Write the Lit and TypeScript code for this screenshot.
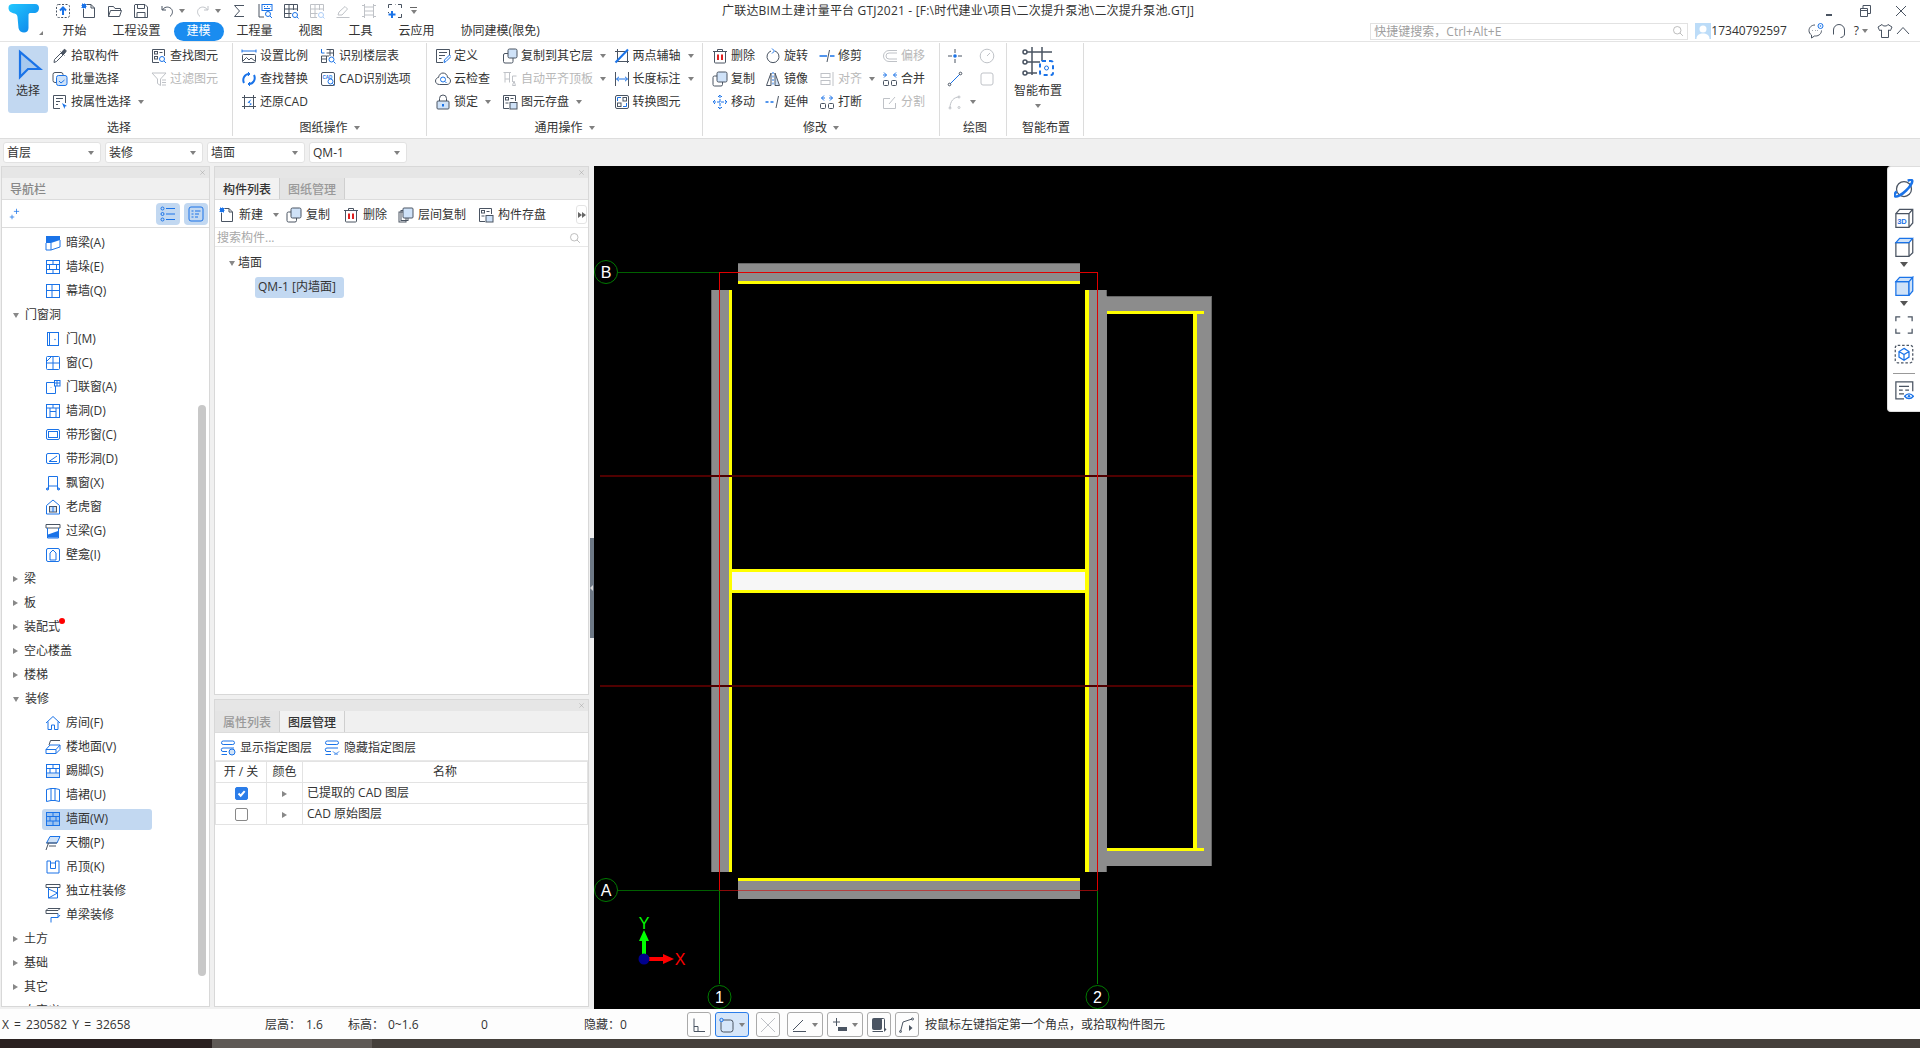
import { LitElement, html, css, svg, nothing } from "lit";
import { customElement } from "lit/decorators.js";

const icons: Record<string, unknown> = {
  // quick access bar
  imp: svg`<rect x="1.5" y="1.5" width="13" height="13" rx="2" stroke-dasharray="2 1.5"/><path class="b w2" d="M8 12V5M5 7.5 8 4.5l3 3"/>`,
  newf: svg`<path d="M2.5 6v8.5h11V5L10 1.5H5.5M10 1.5V5h3.5"/><rect class="bf" x="1" y="1" width="4" height="4" stroke-dasharray="1 1"/>`,
  open: svg`<path d="M1.5 13.5v-10h5l1.5 2h5.5v2M1.5 13.5l2-6h11l-2 6z"/>`,
  save: svg`<path d="M2 1.5h10l2.5 2.5v10.500H1.500V2zM4.500 1.500v4h7v-4M4 14.500v-5h8v5"/>`,
  undo: svg`<path d="M3 3v4h4M3.500 7C5 4 9 3 12 5.500c2.500 2.500 1.500 6-1 8"/>`,
  redo: svg`<path d="M13 3v4H9M12.500 7C11 4 7 3 4 5.500c-2.500 2.500-1.500 6 1 8"/>`,
  sigma: svg`<path d="M13 2.500H3.500L8.500 8l-5 5.500H13"/>`,
  tblq: svg`<path d="M2 1v13h5"/><rect class="b" x="5" y="1.500" width="10" height="6"/><path class="b" d="M7 3.500h1M10 3.500h1M13 3.500h.5M7 5.500h6"/><circle class="b" cx="11" cy="11" r="2.500"/><path class="b" d="m13 13 2 2"/>`,
  gridq: svg`<path d="M8 14.500H1.500v-13h13V8M1.500 6h13M1.500 10.500h7M6 1.500v13M10.500 1.500V7"/><circle class="b" cx="12" cy="12" r="2.500"/><path class="b" d="m14 14 1.500 1.500"/>`,
  pen: svg`<path d="M1.500 14.500h13M3 12l1-3 6-5.500 2.500 2.500L7 12z"/>`,
  film: svg`<path d="M3.500 1v14M12.500 1v14M3.500 4h9M3.500 8h9M3.500 12h9M1 2.500h2.500M1 13.500h2.500M12.500 2.500H15M12.500 13.500H15"/>`,
  frameplus: svg`<path d="M5 1.500H1.500V5M11 1.500h3.500V5M14.500 11v3.500H11M1.500 9v1M8 1.500h.5"/><path class="b w2" d="M5 8v7M1.500 11.500h7"/>`,
  // ribbon
  pick: svg`<path d="m2 14.500.5-3L9 5l2 2-6.500 6.500zM8.500 3.500l4 4"/><path class="k" d="m10 4 2-2.500c1-.5 2.500 1 2 2L12 6z"/>`,
  batch: svg`<rect x="1" y="1.500" width="10" height="10" rx="2"/><rect class="b lf" x="4.500" y="4.500" width="10.500" height="10" rx="2"/><path class="b" d="m7 10 2 2 3.500-3"/>`,
  attr: svg`<path d="M8 14.500H1.500v-13h12V9M4 4.500h7M4 7.500h4M4 10.500h2"/><path class="bs" d="m10 9 5 3-2 .5-.5 2.500z"/>`,
  find: svg`<path d="M8 14.500H1.500v-13h12V8"/><rect x="3.500" y="3.500" width="3" height="2.500"/><rect x="3.500" y="8.500" width="3" height="2.500"/><path d="M8.500 4.500h3"/><circle class="b" cx="11" cy="11" r="2.500"/><path class="b" d="m13 13 2 2"/>`,
  filter: svg`<path d="M1 2h14L9.500 8v6.500L6.500 12.500V8zM11 9h4M11 11.500h4M11 14h4"/>`,
  scale: svg`<path class="b" d="M1 1.500v3M15 1.500v3M1 3h14"/><rect x="1.500" y="6.500" width="13" height="8" rx="1"/><path d="m2 13 3.500-3.500L8 12l2-2 4 3"/>`,
  floor: svg`<path class="b" d="M1.500 1v4h3"/><path d="M1.500 14.500V8h5v6.500zM6.500 1.500h7v7M6.500 5h7M10 1.500V8M6.500 8H9M1.500 11h5"/><circle class="b" cx="11.500" cy="11.500" r="2.500"/><path class="b" d="m13.500 13.500 2 2"/>`,
  replace: svg`<path class="b w2" d="M3 12C1 8 3.500 3 8 3M13 4c2 4-.5 9-5 9"/><path class="b" d="m7 1 2 2-2 2M9 11l-2 2 2 2"/>`,
  cad: svg`<rect x="1.500" y="1.500" width="13" height="13" rx="1.500"/><text class="mini" x="2.500" y="7.500">CAD</text><circle class="b" cx="10.500" cy="10.500" r="2.500"/><path class="b" d="m12.500 12.500 2 2"/>`,
  restore: svg`<path d="M1 3.500h14M1 12.500h14M3.500 1v14M12.500 1v14"/><path class="bs" d="M10.500 5 6.500 8.500l3 1-1.500 2.500 3-2-2.500-1.500z"/>`,
  define: svg`<path d="M8 14.500H1.500v-13h13V7M4 4.500h8M4 7.500h6M4 10.500h2.500"/><path class="b" d="m9 14.500.5-2.500 5-5 1.500 1.500-5 5z"/>`,
  cloud: svg`<path d="M4.500 13.500C2 13.500.5 11.800.5 10S2 6.500 3.500 6.500C4 3.500 6 2 8 2s4.500 1.500 4.500 4.500c2 0 3 1.800 3 3.500s-1.500 3.500-3.500 3.500z"/><circle class="b" cx="8" cy="8.500" r="2.500"/><path class="b" d="m10 10.500 1.500 1.500"/>`,
  lock: svg`<path d="M4.500 7V4.500a3.500 3.500 0 0 1 7 0V7"/><rect class="lf" x="2" y="7" width="12" height="8" rx="1"/><path class="b w2" d="M8 10v2.500"/>`,
  copyto: svg`<rect x="1.500" y="5.500" width="9.500" height="9.500" rx="1.500"/><rect class="lf" x="6" y="1" width="9" height="9" rx="1.500"/>`,
  auto: svg`<path d="M3 1.500v10M7.500 1.500v10M1.500 1.500H9M10.500 5h4M10.500 5v6M12 10l1.500 4.500h-3zM3 8h4.500"/>`,
  store: svg`<path d="M7 14.500H1.500v-13h12V7"/><rect x="3.500" y="3.500" width="3" height="2.500"/><path d="M8.500 4.500h3M3.500 9h3"/><rect class="lf" x="8" y="8.500" width="7" height="6.500"/>`,
  twopt: svg`<path d="M3.500 1v12.500H15M1 3.500h12.500V15"/><path class="b w2" d="M1.500 14.500 14 1.500"/>`,
  dim: svg`<path d="M1.500 1v14M14.500 1v14"/><path class="b" d="M2.500 8h11M5 5.800 2.500 8 5 10.200M11 5.800 13.500 8 11 10.200"/>`,
  convert: svg`<rect x="1.500" y="1.500" width="13" height="13" rx="1.500"/><rect x="3.500" y="9" width="3.500" height="3.500"/><rect x="9" y="3.500" width="3.500" height="3.500"/><path class="b" d="M3.500 7V3.500H7M12.500 9v3.500H9"/>`,
  del: svg`<path d="M1 3.500h14M5.500 3.500V1.500h5v2M2.500 3.500v10.500a1 1 0 0 0 1 1h9a1 1 0 0 0 1-1V3.500"/><path class="r w2" d="M6 6.500v5.500M10 6.500v5.500"/>`,
  copy: svg`<rect x="1" y="5" width="9.500" height="10" rx="1.500"/><rect class="lf" x="5" y="1" width="10" height="10" rx="1.500"/>`,
  move: svg`<path class="b" d="M8 1v14M1 8h14M6 3l2-2 2 2M6 13l2 2 2-2M3 6 1 8l2 2M13 6l2 2-2 2" stroke-dasharray="3 1"/>`,
  rotate: svg`<path d="M10 3a6 6 0 1 1-4 0"/><path class="b" d="M7 .5 9.500 3 7 5.500"/>`,
  mirror: svg`<path d="M6 2 1.500 14.500H6z"/><path class="lf" d="M10 2l4.500 12.500H10z"/><path class="b" d="M8 1v14" stroke-dasharray="2 1.500"/>`,
  trim: svg`<path class="b" d="M.5 8H8M11 8h4.500" stroke-width="1.300"/><path d="M8 14 10.500 2"/>`,
  extend: svg`<path class="b" d="M.5 8H10" stroke-dasharray="3 2" stroke-width="1.300"/><path d="M11 14 13.500 2"/>`,
  align: svg`<rect x="2" y="2.500" width="9" height="4"/><rect x="2" y="9.500" width="9" height="4"/><path d="M14 1v14"/>`,
  brk: svg`<rect x="1.500" y="9.500" width="5" height="5" rx="1"/><rect x="9.500" y="9.500" width="5" height="5" rx="1"/><path class="b" d="M5 1.500 2.500 4 5 6.500M2.500 4H6M11 1.500 13.500 4 11 6.500M13.500 4H10"/>`,
  offset: svg`<path d="M15 2.500H7a5.500 5.500 0 0 0 0 11h8M15 5H7a3 3 0 0 0 0 6h8"/>`,
  merge: svg`<rect x="1.500" y="9.500" width="5" height="5" rx="1"/><rect x="9.500" y="9.500" width="5" height="5" rx="1"/><path class="b" d="M2 1.500 4.500 4 2 6.500M4.500 4H1M14 1.500 11.500 4 14 6.500M11.500 4H15"/>`,
  split: svg`<path d="M13.500 9v5.500h-12v-10H8M7 10l6-7"/>`,
  point: svg`<path d="M8 1v4M8 11v4M1 8h4M11 8h4"/><circle class="bs" cx="8" cy="8" r="1.800"/>`,
  gauge: svg`<circle cx="8" cy="8" r="6.800"/><path d="M8 8l3-3"/>`,
  line: svg`<path class="b" d="M3 13 13 3"/><circle cx="2.500" cy="13.500" r="1.300"/><circle cx="13.500" cy="2.500" r="1.300"/>`,
  box: svg`<rect x="2" y="2" width="12" height="12" rx="2"/>`,
  arc: svg`<path d="M3 14C3 7 7 3 12 3"/><circle cx="3" cy="14" r="1"/><circle cx="12" cy="3" r="1"/><circle cx="12" cy="13.500" r="1"/>`,
  // tree
  anl: svg`<path class="bs" d="M1 1h14v4L6 8H1z"/><path class="b" d="M1 8v7h5V8M6 15l9-3V5"/>`,
  duo: svg`<rect class="b" x="1.500" y="1.500" width="13" height="13"/><path class="b" d="M1.500 5.500h13M1.500 10.500h13M8 1.500v4M4.500 5.500v5M11.500 5.500v5M8 10.500v4"/>`,
  mu: svg`<rect class="b" x="1.500" y="1.500" width="13" height="13"/><path class="b" d="M1.500 7.500h13M7 1.500v13"/>`,
  door: svg`<rect class="b" x="2.500" y="1.500" width="11" height="13"/><path class="b" d="M4.500 1.500v13"/><circle class="bs" cx="10" cy="8.500" r=".7"/>`,
  win: svg`<rect class="b" x="1.500" y="1.500" width="13" height="13" rx="1"/><path class="b" d="M1.500 8h13M8 1.500v13M2 6l4-4"/>`,
  dwin: svg`<path class="b" d="M9 3.500H1.500v11h9V7M6 8.500v.5"/><rect class="b" x="9.500" y="1.500" width="5.500" height="5.500"/><path class="b" d="M12 1.500V7M9.500 4H15"/>`,
  hole: svg`<rect class="b" x="1.500" y="1.500" width="13" height="13"/><path class="b" d="M1.500 5h13M5 5v9.500M11 5v9.500M5 8.500h6M8 1.500V5"/>`,
  band: svg`<rect class="b" x="1.500" y="2.500" width="13" height="10" rx="1.500"/><rect class="b" x="3.500" y="4.500" width="9" height="6"/>`,
  bandh: svg`<rect class="b" x="1.500" y="2.500" width="13" height="10" rx="1.500"/><path class="b" d="M4 10.500 12 5M4 10.500h8"/>`,
  bay: svg`<path class="b" d="M3.500 14V1.500h9V14M1 14h3M12 14h3M3.500 11h9"/><circle class="b" cx="2.500" cy="14" r="1"/><circle class="b" cx="13.500" cy="14" r="1"/>`,
  dorm: svg`<path class="b" d="M8 1 1.500 6.500v8.500h13V6.500z"/><rect class="lf" x="4.500" y="7.500" width="7" height="5.500"/><path class="b" d="M8 7.500v5.500"/>`,
  lintel: svg`<path d="M1 1.500h14v3.500H1z"/><path class="b" d="M2.500 5v10h11V5"/><path class="bs" d="M3 14.500v-3l10-3.500v6.500z"/>`,
  niche: svg`<rect class="b" x="1.500" y="1.500" width="13" height="13" rx="1.500"/><path class="b" d="M5 13V6l3-3 3 3v7z"/>`,
  room: svg`<path class="b" d="M1 8 8 1.500 15 8M3 6.500v8h3.500V10h3v4.500H13v-8"/>`,
  floorf: svg`<path d="M4 6 5.500 1.500H15"/><path class="b" d="M1 10.500 5 6h10l-4 4.500zM1 10.500v4h10v-4M11 14.500l4-4V6"/>`,
  kick: svg`<rect class="lf nos" x="1.500" y="10.500" width="13" height="4"/><rect class="b" x="1.500" y="1.500" width="13" height="13"/><path class="b" d="M1.500 5.500h13M8 1.500v4M1.500 10h13M5 5.500V10M11 5.500V10"/>`,
  skirt: svg`<path class="b" d="M1.500 2.500 6 1.500v12l-4.500 1zM14.500 2.500 10 1.500v12l4.500 1zM6 1.500h4M6 13.500h4"/>`,
  wallf: svg`<rect class="b wf" x="1.500" y="1.500" width="13" height="13"/><path class="b" d="M1.500 5.500h13M8 1.500v4M1.500 10h13M5 5.500V10M11 5.500V10M8 10v4.500"/>`,
  ceil: svg`<path class="b lf" d="M1.500 8 5 1.500h10L12 8z"/><path d="M3.500 8 1 15M1.500 8H12M4 11h7"/>`,
  hang: svg`<path class="b" d="M2 2h3.500v2h5V2H14v12H2z"/><path class="b" d="M5.500 4v5.500h5V4"/>`,
  col: svg`<path d="M1 1.500h14v3H1z"/><path class="b" d="M3.500 4.500v10.500h9V4.500M3.500 6l9 4M3.500 15l9-5"/>`,
  single: svg`<path d="M1 3.500 3 1.500h12L13 3.500zM1 3.500v3h12"/><path class="b" d="M13 6.500v4H6v5M13 10.500 15 8"/>`,
  // panel toolbars
  spark: svg`<path class="b" d="M10 1v7M6.500 4.500h7M4 9v6M1 12h6"/>`,
  listb: svg`<g class="b"><circle cx="2.500" cy="2.500" r="1.500"/><circle cx="2.500" cy="8" r="1.500"/><circle cx="2.500" cy="13.500" r="1.500"/><path d="M6 2.500h9M6 8h9M6 13.500h9"/></g>`,
  listc: svg`<g class="b"><rect x="1" y="1" width="14" height="14" rx="2"/><path d="M3.500 5h2M7 5h5.500M3.500 8h2M7 8h4M3.500 11h2M7 11h3"/></g>`,
  lcopy: svg`<rect x="1" y="5" width="7" height="10"/><rect x="3" y="3.500" width="7" height="10"/><rect class="lf" x="5" y="1" width="10" height="10" rx="1"/>`,
  lshow: svg`<g class="b"><rect x="1.500" y="1" width="13" height="3.500" rx="1.700"/><path d="M14 8H3a1.700 1.700 0 0 0 0 3.500h4M1.500 14.500H7"/><circle class="lf" cx="12" cy="12" r="3"/></g>`,
  lhide: svg`<g class="b"><rect x="1.500" y="1" width="13" height="3.500" rx="1.700"/><path d="M14 8H3a1.700 1.700 0 0 0 0 3.500h4M1.500 14.500H7M9 11.500c2 2.500 4 2.500 6 0M11 14v1M13 14v1"/></g>`,
  search: svg`<circle cx="7" cy="7" r="5"/><path d="m10.500 10.500 4 4"/>`,
  // right toolbar
  orbit: svg`<circle cx="8" cy="8" r="6"/><path class="b w2" d="M2.200 10C.5 11.500 0 13 .7 13.700c1.500 1 5.500-1 9-4.500s5.500-7 4.700-8.200C13.800.5 12.500.7 11 1.500"/>`,
  d3: svg`<path d="M1.500 4.500h10.500v11H1.500zM1.500 4.500l3-3.500H15v11l-3 3.500M12 4.500 15 1"/><text class="mini3" x="2.500" y="12.500">3D</text>`,
  cubet: svg`<path d="M1.500 4.500h10.500v11H1.500zM12 15.500l3-3V1.500M1.500 4.500"/><path class="b lf" d="M1.500 4.500l3-3.500H15l-3 3.500z"/>`,
  cubef: svg`<path class="b lf" d="M1.500 4.500h10.500v11H1.500z"/><path class="b lf" d="M1.500 4.500l3-3.500H15l-3 3.500zM12 4.500 15 1v11l-3 3.500z"/>`,
  frame: svg`<path d="M5 1.500H1.500V5M11 1.500h3.500V5M14.500 11v3.500H11M1.500 11v3.500H5"/>`,
  dcube: svg`<rect x="1" y="1" width="14" height="14" rx="2" stroke-dasharray="2 1.500"/><path class="b" d="M8 3.500 12 6v4.500L8 13l-4-2.500V6zM4 6l4 2.500L12 6M8 8.500V13"/>`,
  note: svg`<path d="M8 15H1.500V1.500H15V9M4 5h8M4 8h3M9 8h3M4 11h4"/><path class="b" d="M8.500 13c2-2.500 5-2.500 7 0-2 2.500-5 2.500-7 0z"/><circle class="bs" cx="12" cy="13" r="1"/>`,
  // status bar
  ortho: svg`<path d="M3 1.500v13h11M3 9.500h4v5"/>`,
  sel: svg`<rect x="2" y="3" width="12" height="12" rx="2.500"/><circle class="lf b" cx="2.500" cy="3" r="1.700"/>`,
  cross: svg`<path d="m1 1 14 14M15 1 1 15"/>`,
  angle: svg`<path d="M1 13 11 3M1 14.500h13"/>`,
  plusb: svg`<path d="M4.500 1v8M1 5h7"/><rect class="solid" x="6" y="10" width="9" height="4"/>`,
  stack: svg`<rect class="k" x="1.500" y="1.500" width="9" height="11" rx="1"/><path d="M3.500 1.500h9a1 1 0 0 1 1 1V13M1.500 14.500H12"/><path class="solid" d="m13 10 2.500 2.500-2.500 2.500z"/>`,
  polyc: svg`<path d="M1.500 14.500 4 5l9-3"/><circle cx="1.500" cy="14.500" r="1"/><circle cx="13.500" cy="2" r="1"/><path class="solid" d="m10 8 3.500 3-3.500 3z"/>`,
  chat: svg`<path d="M7 2C3.500 2 1 4.500 1 7.500c0 2 1 3.500 2.500 4.500V15l3-2h1c3.500 0 6-2.500 6-5.500M4.500 7.500h.5M7 7.500h.5M9.500 7.500h.5"/><circle class="b" cx="12.500" cy="3" r="2.500"/><circle class="bs" cx="12.500" cy="3" r=".8"/>`,
  head: svg`<path d="M2.500 11V7a5.500 5.500 0 0 1 11 0v4M2.500 7v4.500M13.500 7v4.500M13.500 11c0 2-2 3.500-4 3.500"/>`,
  shirt: svg`<path d="M5 1.500 1 4l1.500 3.500L4.500 7v7.500h7V7l2 .5L15 4l-4-2.500C10.500 3.500 5.500 3.500 5 1.500z"/>`,
  chev: svg`<path d="m2 11 6-6.500 6 6.500"/>`,
  minw: svg`<path class="w2" d="M5 12h6"/>`,
  rest: svg`<path d="M3.500 5.500h7v8h-7zM6 5.500v-3h7.500v8h-3M3.500 7.500h7"/>`,
  closew: svg`<path d="m3 3 10 10M13 3 3 13"/>`,
  avatar: svg`<rect class="avbg" x="0" y="0" width="16" height="16"/><circle class="avfg" cx="8" cy="6" r="3.500"/><path class="avfg" d="M1.500 16c0-4 3-5.500 6.500-5.500s6.500 1.500 6.500 5.500z"/>`,
};

const ic = (n: string) => html`<svg class="i" viewBox="0 0 16 16">${icons[n]}</svg>`;

type Cell = { i?: string; t?: string; c?: boolean; d?: boolean };
type Group = { w: number; pad: number; label: string; nudge?: number; caret?: boolean; cols: { w: number; cells: Cell[] }[] };

const groups: Group[] = [
  { w: 233, pad: 52, label: "选择", nudge: 6, cols: [
    { w: 99, cells: [{ i: "pick", t: "拾取构件" }, { i: "batch", t: "批量选择" }, { i: "attr", t: "按属性选择", c: true }] },
    { w: 80, cells: [{ i: "find", t: "查找图元" }, { i: "filter", t: "过滤图元", d: true }] },
  ] },
  { w: 194, pad: 8, label: "图纸操作", caret: true, cols: [
    { w: 79, cells: [{ i: "scale", t: "设置比例" }, { i: "replace", t: "查找替换" }, { i: "restore", t: "还原CAD" }] },
    { w: 100, cells: [{ i: "floor", t: "识别楼层表" }, { i: "cad", t: "CAD识别选项" }] },
  ] },
  { w: 276, pad: 8, label: "通用操作", caret: true, cols: [
    { w: 67, cells: [{ i: "define", t: "定义" }, { i: "cloud", t: "云检查" }, { i: "lock", t: "锁定", c: true }] },
    { w: 111.5, cells: [{ i: "copyto", t: "复制到其它层", c: true }, { i: "auto", t: "自动平齐顶板", c: true, d: true }, { i: "store", t: "图元存盘", c: true }] },
    { w: 80, cells: [{ i: "twopt", t: "两点辅轴", c: true }, { i: "dim", t: "长度标注", c: true }, { i: "convert", t: "转换图元" }] },
  ] },
  { w: 237, pad: 9, label: "修改", caret: true, cols: [
    { w: 53, cells: [{ i: "del", t: "删除" }, { i: "copy", t: "复制" }, { i: "move", t: "移动" }] },
    { w: 54, cells: [{ i: "rotate", t: "旋转" }, { i: "mirror", t: "镜像" }, { i: "extend", t: "延伸" }] },
    { w: 63, cells: [{ i: "trim", t: "修剪" }, { i: "align", t: "对齐", c: true, d: true }, { i: "brk", t: "打断" }] },
    { w: 50, cells: [{ i: "offset", t: "偏移", d: true }, { i: "merge", t: "合并" }, { i: "split", t: "分割", d: true }] },
  ] },
  { w: 67, pad: 7, label: "绘图", nudge: 4, cols: [
    { w: 32, cells: [{ i: "point" }, { i: "line" }, { i: "arc", c: true, d: true }] },
    { w: 24, cells: [{ i: "gauge", d: true }, { i: "box", d: true }] },
  ] },
];

const tree: [number, string, string][] = [
  [2, "anl", "暗梁(A)"], [2, "duo", "墙垛(E)"], [2, "mu", "幕墙(Q)"], [1, "open", "门窗洞"],
  [2, "door", "门(M)"], [2, "win", "窗(C)"], [2, "dwin", "门联窗(A)"], [2, "hole", "墙洞(D)"],
  [2, "band", "带形窗(C)"], [2, "bandh", "带形洞(D)"], [2, "bay", "飘窗(X)"], [2, "dorm", "老虎窗"],
  [2, "lintel", "过梁(G)"], [2, "niche", "壁龛(I)"], [1, "", "梁"], [1, "", "板"], [1, "", "装配式"],
  [1, "", "空心楼盖"], [1, "", "楼梯"], [1, "open", "装修"], [2, "room", "房间(F)"], [2, "floorf", "楼地面(V)"],
  [2, "kick", "踢脚(S)"], [2, "skirt", "墙裙(U)"], [2, "wallf", "墙面(W)"], [2, "ceil", "天棚(P)"],
  [2, "hang", "吊顶(K)"], [2, "col", "独立柱装修"], [2, "single", "单梁装修"], [1, "", "土方"], [1, "", "基础"],
  [1, "", "其它"], [1, "", "自定义"],
];

const tabs = ["开始", "工程设置", "建模", "工程量", "视图", "工具", "云应用", "协同建模(限免)"];
const qat: [string, boolean?, boolean?][] = [
  ["imp"], ["newf"], ["open"], ["save"], ["undo", false, true], ["redo", true, true], ["sigma"], ["tblq"], ["gridq"],
  ["gridq", true], ["pen", true], ["film", true], ["frameplus"],
];
const statusCells: [string, number][] = [
  ["X = 230582 Y = 32658", 263], ["层高：", 41], ["1.6", 42], ["标高：", 40], ["0~1.6", 93], ["0", 103], ["隐藏：", 36], ["0", 67],
];

@customElement("app-root")
export class AppRoot extends LitElement {
  static styles = css`
    :host {
      display: block;
      width: 1920px;
      height: 1048px;
      overflow: hidden;
      background: #f0f0f0;
      color: #333;
      font: 12px/16px "Open Sans", "Noto Sans CJK SC", sans-serif;
    }
    svg.i { width: 16px; height: 16px; flex: none; fill: none; stroke: #4a5462; stroke-width: 1; display: block; }
    .b { stroke: #1a73e8; }
    .k { fill: #4a5462; }
    .r { stroke: #e02020; }
    .bf { fill: #1a73e8; stroke: #1a73e8; }
    .bs { fill: #1a73e8; stroke: none; }
    .lf { fill: #cfe2f8; }
    .wf { fill: #9cc3f0; }
    .nos { stroke: none; }
    .w2 { stroke-width: 2; }
    .solid { fill: #4a5462; stroke: none; }
    .mini { font: 700 4.500px "Liberation Sans", sans-serif; fill: #1a73e8; stroke: none; }
    .mini3 { font: 700 6px "Liberation Sans", sans-serif; fill: #1a73e8; stroke: none; }
    .avbg { fill: #bcdcf8; stroke: none; }
    .avfg { fill: #fff; stroke: none; }
    .off { color: #b8b8b8; }
    .off svg.i { opacity: 0.35; }
    .caret {
      display: inline-block;
      width: 0;
      height: 0;
      border: 3px solid transparent;
      border-top: 4px solid #808080;
      border-bottom: 0;
      flex: none;
    }

    /* title and tabs */
    .head { display: flex; height: 42px; box-sizing: border-box; background: #fff; border-bottom: 1px solid #e4e4e4; }
    .logo { width: 49.500px; flex: none; position: relative; }
    .logo svg { position: absolute; left: 8px; top: 3px; width: 31px; height: 30px; }
    .logo .corner { position: absolute; left: 39px; top: 31px; border-bottom: 4px solid #808080; border-left: 4px solid transparent; }
    .head-main { flex: 1; display: flex; flex-direction: column; min-width: 0; }
    .row1 { height: 21px; display: flex; align-items: center; }
    .qat { width: 672.500px; flex: none; display: flex; align-items: center; gap: 10px; padding-left: 5px; box-sizing: border-box; }
    .qat .pair { display: flex; align-items: center; gap: 4px; }
    .qat .last { margin-left: -3px; display: flex; flex-direction: column; gap: 2px; align-items: center; width: 8px; }
    .qat .last i { display: block; width: 7px; height: 1px; background: #666; }
    .title { flex: 1; white-space: nowrap; letter-spacing: 0.200px; }
    .win { display: flex; align-items: center; gap: 20px; margin-right: 11px; }
    .row2 { height: 20px; display: flex; align-items: center; }
    .tab { padding: 0 13px; height: 19px; line-height: 18px; white-space: nowrap; }
    .tab.on { background: #1a8cf0; color: #fff; border-radius: 10px; }
    .tools { margin-left: auto; display: flex; align-items: center; margin-right: 2px; }
    .quick {
      width: 318px;
      height: 17px;
      border: 1px solid #e2e2e2;
      box-sizing: border-box;
      color: #a0a0a0;
      padding: 0 3px;
      display: flex;
      align-items: center;
      justify-content: space-between;
      line-height: 15px;
      margin-right: 7px;
    }
    .quick svg.i { width: 12px; height: 12px; stroke: #a8a8a8; }
    .user { margin-right: 21px; }
    .tools svg.i { margin-right: 7px; }
    .tools .quick svg.i, .tools svg.av { margin-right: 0; }
    .tools .qm { margin: 0 3px 0 0; }
    .tools .help { margin-right: 9px; }
    .tools .shirt svg.i { margin-right: 2px; }
    .tools .shirt { display: flex; }

    /* ribbon */
    .ribbon { height: 97px; box-sizing: border-box; background: #fff; display: flex; border-bottom: 1px solid #ddd; }
    .group { flex: none; box-sizing: border-box; height: 93px; margin-top: 1px; border-right: 1px solid #dcdcdc; display: flex; flex-direction: column; position: relative; }
    .cols { height: 70px; display: flex; box-sizing: border-box; }
    .col { flex: none; display: flex; flex-direction: column; padding-top: 1px; }
    .cell { height: 23px; display: flex; align-items: center; gap: 3px; white-space: nowrap; }
    .cell .caret { margin-left: 4px; }
    .glabel { flex: 1; display: flex; align-items: center; justify-content: center; gap: 6px; padding-top: 6px; }
    .pick { position: absolute; left: 8px; top: 3px; width: 40px; height: 67px; background: #c2d8f1; border-radius: 3px; display: flex; flex-direction: column; align-items: center; }
    .pick svg { width: 30px; height: 34px; margin-top: 3px; }
    .smart { width: 77px; }
    .smartbody { width: 62px; height: 70px; display: flex; flex-direction: column; align-items: center; }
    .smartbody svg { width: 32px; height: 32px; margin-top: 2px; fill: none; }
    .smartbody span { margin-top: 6px; }
    .smartbody .caret { margin-top: 5px; }

    /* combo bar */
    .combos { height: 27px; box-sizing: border-box; padding: 3px 3px 0; display: flex; gap: 4px; }
    .combo { width: 98px; height: 21px; box-sizing: border-box; padding: 0 6px 0 3px; background: #fff; border: 1px solid #e2e2e2; border-radius: 3px; display: flex; align-items: center; justify-content: space-between; }

    /* work area */
    .work { height: 843px; display: flex; }
    .panel { background: #fff; border: 1px solid #d8d8d8; box-sizing: border-box; display: flex; flex-direction: column; overflow: hidden; }
    .left { width: 209px; height: 841px; margin-left: 1px; position: relative; }
    .mid { width: 375px; margin-left: 4px; display: flex; flex-direction: column; gap: 4px; height: 841px; }
    .strip { height: 11px; background: #e6e6e6; flex: none; display: flex; justify-content: flex-end; align-items: center; padding-right: 3px; }
    .strip svg.i { width: 7px; height: 7px; stroke: #999; }
    .navhead { height: 22px; background: #f0f0f0; color: #888; line-height: 23px; padding-left: 8px; border-bottom: 1px solid #dcdcdc; flex: none; box-sizing: border-box; font-weight: 500; }
    .navtools { height: 28px; flex: none; box-sizing: border-box; border-bottom: 1px solid #dcdcdc; display: flex; align-items: center; padding: 0 1px 0 7px; gap: 4px; }
    .navtools .spark { margin-right: auto; width: 12px; height: 12px; }
    .toggle { width: 24px; height: 22px; background: #c2d8f1; border-radius: 4px; display: flex; align-items: center; justify-content: center; }
    .tree { flex: 1; overflow: hidden; padding-top: 3px; }
    .node { height: 24px; display: flex; align-items: center; white-space: nowrap; }
    .node.l1 { padding-left: 11px; gap: 6px; }
    .node.l2 { padding-left: 40px; }
    .node .row { display: flex; align-items: center; gap: 5px; height: 21px; width: 107px; padding-left: 3px; border-radius: 3px; }
    .node .row.on { background: #c2d8f1; }
    .tri { width: 0; height: 0; flex: none; border: 3px solid transparent; border-left: 5px solid #888; border-right: 0; }
    .tri.open { border: 3px solid transparent; border-top: 5px solid #888; border-bottom: 0; }
    .dot { position: relative; }
    .dot::after { content: ""; position: absolute; right: -5px; top: -1px; width: 6px; height: 6px; background: #f00; border-radius: 50%; }
    .scroll { position: absolute; left: 196px; top: 238px; width: 8px; height: 571px; background: #c8c8c8; border-radius: 4px; }

    .tabs { height: 22px; flex: none; display: flex; background: #f0f0f0; border-bottom: 1px solid #dcdcdc; box-sizing: border-box; }
    .ptab { width: 65px; box-sizing: border-box; text-align: center; line-height: 23px; color: #999; background: #e4e4e4; border-right: 1px solid #cfcfcf; font-weight: 500; }
    .ptab.on { background: #f2f2f2; color: #333; }
    .bar { height: 28px; flex: none; box-sizing: border-box; display: flex; align-items: center; border-bottom: 1px solid #e8e8e8; padding: 2px 0 0 4px; position: relative; }
    .bar .it { display: flex; align-items: center; gap: 4px; white-space: nowrap; }
    .more { margin-left: auto; margin-right: 1px; width: 11px; height: 19px; box-sizing: border-box; border: 1px solid #e4e4e4; border-radius: 3px; display: flex; align-items: center; justify-content: center; }
    .more i { border: 3px solid transparent; border-left: 4px solid #666; border-right: 0; }
    .find { height: 19px; flex: none; box-sizing: border-box; border-bottom: 1px solid #e8e8e8; color: #a8a8a8; padding: 1px 3px 0 2px; display: flex; align-items: center; justify-content: space-between; line-height: 18px; }
    .find svg.i { width: 12px; height: 12px; stroke: #aaa; margin-right: 4px; }
    .ctree { flex: 1; padding: 6px 0 0 14px; }
    .croot { display: flex; align-items: center; gap: 3px; height: 20px; }
    .citem { margin: 4px 0 0 26px; width: 89px; height: 21px; line-height: 20px; background: #c2d8f1; border-radius: 3px; padding-left: 3px; box-sizing: border-box; white-space: nowrap; }
    .top-panel { height: 529px; flex: none; }
    .bot-panel { flex: 1; }
    .lbar { padding-left: 5px; }
    .lbar .it { margin-right: 12px; }
    table { border-collapse: collapse; width: 373px; table-layout: fixed; }
    th, td { border: 1px solid #e3e3e3; height: 21px; padding: 0; font-weight: 400; text-align: center; box-sizing: border-box; }
    td.name { text-align: left; padding-left: 4px; }
    .chk { width: 13px; height: 13px; box-sizing: border-box; border: 1px solid #888; border-radius: 2px; margin: 0 auto; display: block; }
    .chk.on { background: #2b7de9; border-color: #2b7de9; }
    .chk svg { display: block; width: 11px; height: 11px; fill: none; stroke: #fff; stroke-width: 2; }
    td .tri { display: inline-block; }

    .handle { width: 4px; height: 100px; margin-left: 1px; align-self: center; background: #6d7885; flex: none; display: flex; align-items: center; }
    .handle i { border: 3px solid transparent; border-right: 3px solid #d8d8d8; border-left: 0; }
    .canvas { flex: 1; background: #000; position: relative; overflow: hidden; }
    .canvas > svg { display: block; width: 1326px; height: 843px; }
    .canvas > svg text { font: 16px "Liberation Sans", sans-serif; fill: #fff; text-anchor: middle; }
    .canvas > svg text.x { fill: #f00; }
    .canvas > svg text.y { fill: #0f0; }
    .side { position: absolute; right: 0; top: 0; width: 33px; height: 246px; background: #fff; border-radius: 4px 0 0 4px; border: 1px solid #ddd; border-right: 0; box-sizing: border-box; display: flex; flex-direction: column; align-items: center; padding-top: 12px; }
    .side svg.i { width: 20px; height: 20px; }
    .side .sp { margin-bottom: 9px; }
    .side .sp.tight { margin-bottom: 6px; }
    .side .caret { margin: -1px 0 9px; border-width: 4px; border-top: 5px solid #555; border-bottom: 0; }
    .side hr { width: 22px; height: 1px; border: 0; background: #999; margin: 0 0 6px; }

    /* status bar */
    .status { height: 30px; box-sizing: border-box; padding: 1px 0 0 2px; background: #fdfdfd; display: flex; align-items: center; white-space: nowrap; }
    .status .cell2 { flex: none; }
    .status .cell2:first-child { word-spacing: 2px; }
    .btns { display: flex; gap: 4px; }
    .btn { height: 25px; min-width: 24px; box-sizing: border-box; border: 1px solid #aaa; border-radius: 3px; display: flex; align-items: center; justify-content: center; gap: 4px; padding: 0 3px; }
    .btn.on { background: #d6e6f9; border-color: #2b7de9; }
    .btn.mid-gap { margin: 0 3px; }
    .btn.wide { min-width: 36px; }
    .hint { margin-left: 6px; }
    .taskbar { height: 9px; display: flex; background: #45403b; }
    .taskbar i { display: block; height: 9px; }
    .taskbar .a { width: 212px; background: #2a2120; }
    .taskbar .c { width: 160px; background: #5f5a56; }
  `;

  private cell(c: Cell) {
    return html`<div class="cell ${c.d ? "off" : ""}">${c.i ? ic(c.i) : nothing}${c.t ? html`<span>${c.t}</span>` : nothing}${c.c ? html`<i class="caret"></i>` : nothing}</div>`;
  }

  private renderHead() {
    return html`<div class="head">
      <div class="logo">
        <svg viewBox="0 0 31 30">
          <defs><linearGradient id="lg" x1="0" y1="0" x2="1" y2="1"><stop offset="0" stop-color="#22c8ff"/><stop offset="1" stop-color="#0b7fe8"/></linearGradient></defs>
          <path fill="url(#lg)" d="M5 1h22c3 0 4 2 4 4 0 3-2 5-5 5h-4c-1 0-1.500 1-1.500 2v13c0 3-2 4.500-4.500 4.500S11 28 10.500 25l-1-11c-.2-2-1-3-3-3.500C3 10 .5 8 .5 5S2 1 5 1z"/>
        </svg>
        <i class="corner"></i>
      </div>
      <div class="head-main">
        <div class="row1">
          <div class="qat">
            ${qat.map(([n, d, c]) => html`<div class="pair ${d ? "off" : ""}">${ic(n)}${c ? html`<i class="caret"></i>` : nothing}</div>`)}
            <div class="last"><i></i><span class="caret"></span></div>
          </div>
          <div class="title">广联达BIM土建计量平台 GTJ2021 - [F:\\时代建业\\项目\\二次提升泵池\\二次提升泵池.GTJ]</div>
          <div class="win">${ic("minw")}${ic("rest")}${ic("closew")}</div>
        </div>
        <div class="row2">
          ${tabs.map((t) => html`<div class="tab ${t === "建模" ? "on" : ""}">${t}</div>`)}
          <div class="tools">
            <div class="quick"><span>快捷键搜索，Ctrl+Alt+E</span>${ic("search")}</div>
            <svg class="i av" viewBox="0 0 16 16">${icons.avatar}</svg>
            <span class="user">17340792597</span>
            ${ic("chat")}${ic("head")}
            <span class="qm">?</span><i class="caret help"></i>
            <span class="shirt">${ic("shirt")}</span>${ic("chev")}
          </div>
        </div>
      </div>
    </div>`;
  }

  private renderRibbon() {
    return html`<div class="ribbon">
      ${groups.map((g) => html`<div class="group" style="width:${g.w}px">
        ${g.label === "选择" ? html`<div class="pick">
          <svg viewBox="0 0 30 34" fill="none"><path d="M7 3v25l8-8h12z" fill="#a6c8ee" stroke="#1a73e8" stroke-width="2.200"/></svg>
          <span>选择</span></div>` : nothing}
        <div class="cols" style="padding-left:${g.pad}px">
          ${g.cols.map((c) => html`<div class="col" style="width:${c.w}px">${c.cells.map((x) => this.cell(x))}</div>`)}
        </div>
        <div class="glabel" style="padding-left:${g.nudge ?? 0}px"><span>${g.label}</span>${g.caret ? html`<i class="caret"></i>` : nothing}</div>
      </div>`)}
      <div class="group smart">
        <div class="smartbody">
          <svg viewBox="0 0 32 32">
            <g stroke="#4a5462" stroke-width="1.500">
              <path d="M10 2v28M20 2v14M4 7h26M4 17h14M4 28h11"/>
              <circle cx="3" cy="7" r="2" fill="#fff"/><circle cx="3" cy="17" r="2" fill="#fff"/><circle cx="3" cy="28" r="2" fill="#fff"/>
            </g>
            <rect x="18" y="16" width="13" height="14" rx="2" stroke="#1a73e8" stroke-width="2" stroke-dasharray="4 3"/>
            <circle cx="24.500" cy="23" r="2" stroke="#1a73e8"/>
          </svg>
          <span>智能布置</span>
          <i class="caret"></i>
        </div>
        <div class="glabel" style="padding-left:2px">智能布置</div>
      </div>
    </div>`;
  }

  private renderNav() {
    return html`<div class="panel left">
      <div class="strip">${ic("closew")}</div>
      <div class="navhead">导航栏</div>
      <div class="navtools">
        <svg class="i spark" viewBox="0 0 16 16">${icons.spark}</svg>
        <div class="toggle">${ic("listb")}</div>
        <div class="toggle">${ic("listc")}</div>
      </div>
      <div class="tree">
        ${tree.map(([l, i, t]) => l === 1
          ? html`<div class="node l1"><i class="tri ${i === "open" ? "open" : ""}"></i><span class="${t === "装配式" ? "dot" : ""}">${t}</span></div>`
          : html`<div class="node l2"><div class="row ${t === "墙面(W)" ? "on" : ""}">${ic(i)}<span>${t}</span></div></div>`)}
      </div>
      <div class="scroll"></div>
    </div>`;
  }

  private renderMid() {
    return html`<div class="mid">
      <div class="panel top-panel">
        <div class="strip">${ic("closew")}</div>
        <div class="tabs"><div class="ptab on">构件列表</div><div class="ptab">图纸管理</div></div>
        <div class="bar">
          <div class="it" style="width:67px">${ic("newf")}<span>新建</span><i class="caret" style="margin-left:6px"></i></div>
          <div class="it" style="width:57px">${ic("copy")}<span>复制</span></div>
          <div class="it" style="width:55px">${ic("del")}<span>删除</span></div>
          <div class="it" style="width:80px">${ic("lcopy")}<span>层间复制</span></div>
          <div class="it">${ic("store")}<span>构件存盘</span></div>
          <div class="more"><i></i><i></i></div>
        </div>
        <div class="find"><span>搜索构件...</span>${ic("search")}</div>
        <div class="ctree">
          <div class="croot"><i class="tri open"></i><span>墙面</span></div>
          <div class="citem">QM-1 [内墙面]</div>
        </div>
      </div>
      <div class="panel bot-panel">
        <div class="strip">${ic("closew")}</div>
        <div class="tabs"><div class="ptab">属性列表</div><div class="ptab on">图层管理</div></div>
        <div class="bar lbar">
          <div class="it">${ic("lshow")}<span>显示指定图层</span></div>
          <div class="it">${ic("lhide")}<span>隐藏指定图层</span></div>
        </div>
        <table>
          <colgroup><col style="width:51px"/><col style="width:36px"/><col/></colgroup>
          <tr><th>开 / 关</th><th>颜色</th><th>名称</th></tr>
          <tr><td><span class="chk on"><svg viewBox="0 0 11 11"><path d="m2.500 5.500 2.200 2.200 4-4.500"/></svg></span></td><td><i class="tri"></i></td><td class="name">已提取的 CAD 图层</td></tr>
          <tr><td><span class="chk"></span></td><td><i class="tri"></i></td><td class="name">CAD 原始图层</td></tr>
        </table>
      </div>
    </div>`;
  }

  private renderCanvas() {
    const octagon = (x: number, y: number, t: string) => svg`
      <circle cx="${x}" cy="${y}" r="11.500" fill="none" stroke="#007a00"/>
      <text x="${x}" y="${y + 6}">${t}</text>`;
    return html`<div class="canvas">
      <svg viewBox="594 166 1326 843" shape-rendering="crispEdges">
        <!-- walls -->
        <g fill="#8c8c8c">
          <rect x="738" y="263" width="342" height="21"/>
          <rect x="711" y="290" width="21" height="582"/>
          <rect x="1085" y="290" width="22" height="582"/>
          <rect x="1107" y="296" width="105" height="18"/>
          <rect x="1193" y="296" width="19" height="570"/>
          <rect x="1107" y="848" width="105" height="18"/>
          <rect x="738" y="878" width="342" height="21"/>
        </g>
        <g fill="#666">
          <rect x="738" y="263" width="342" height="1"/>
          <rect x="1106" y="290" width="1" height="6"/>
          <rect x="1106" y="866" width="1" height="6"/>
          <rect x="1211" y="296" width="1" height="570"/>
          <rect x="1107" y="296" width="105" height="1"/>
          <rect x="711" y="290" width="1" height="582"/>
        </g>
        <g fill="#ff0">
          <rect x="738" y="281" width="342" height="3"/>
          <rect x="729" y="290" width="3" height="582"/>
          <rect x="1085" y="290" width="4" height="582"/>
          <rect x="1107" y="311" width="97" height="3"/>
          <rect x="1193" y="314" width="4" height="534"/>
          <rect x="1107" y="848" width="97" height="3"/>
          <rect x="738" y="878" width="342" height="3"/>
          <rect x="731" y="569" width="355" height="24"/>
        </g>
        <rect x="732" y="572" width="353" height="18" fill="#f7f7f7"/>
        <!-- axes -->
        <g fill="#500000">
          <rect x="600" y="475" width="593" height="2"/>
          <rect x="600" y="685" width="593" height="2"/>
        </g>
        <g fill="#006000">
          <rect x="618" y="272" width="101" height="1"/>
          <rect x="618" y="890" width="101" height="1"/>
        </g>
        <g fill="#008000">
          <rect x="719" y="890" width="1" height="94"/>
          <rect x="1097" y="890" width="1" height="94"/>
        </g>
        <g fill="#e00000">
          <rect x="719" y="272" width="379" height="1"/>
          <rect x="719" y="272" width="1" height="618"/>
          <rect x="1097" y="272" width="1" height="618"/>
        </g>
        <rect x="719" y="890" width="379" height="1" fill="#8c0a0a"/>
        <rect x="738" y="890" width="342" height="1" fill="#b44040"/>
        <g shape-rendering="auto">
          ${octagon(606, 272, "B")}${octagon(606, 890, "A")}${octagon(719.500, 997, "1")}${octagon(1097.500, 997, "2")}
          <path d="M644 959V940" stroke="#0f0" stroke-width="4"/>
          <path d="M644 930l-5 11h10z" fill="#0f0"/>
          <path d="M648 959h16" stroke="#f00" stroke-width="4"/>
          <path d="M674 959l-11-5v10z" fill="#f00"/>
          <circle cx="644" cy="959" r="5.500" fill="#00008c"/>
          <text class="y" x="644" y="929">Y</text>
          <text class="x" x="680" y="965">X</text>
        </g>
      </svg>
      <div class="side">
        <div class="sp">${ic("orbit")}</div>
        <div class="sp">${ic("d3")}</div>
        <div class="sp tight">${ic("cubet")}</div>
        <i class="caret"></i>
        <div class="sp tight">${ic("cubef")}</div>
        <i class="caret"></i>
        <div class="sp">${ic("frame")}</div>
        <div class="sp">${ic("dcube")}</div>
        <hr/>
        <div>${ic("note")}</div>
      </div>
    </div>`;
  }

  render() {
    return html`
      ${this.renderHead()}
      ${this.renderRibbon()}
      <div class="combos">
        ${["首层", "装修", "墙面", "QM-1"].map((t) => html`<div class="combo"><span>${t}</span><i class="caret"></i></div>`)}
      </div>
      <div class="work">
        ${this.renderNav()}
        ${this.renderMid()}
        <div class="handle"><i></i></div>
        ${this.renderCanvas()}
      </div>
      <div class="status">
        ${statusCells.map(([t, w]) => html`<span class="cell2" style="width:${w}px">${t}</span>`)}
        <div class="btns">
          <div class="btn">${ic("ortho")}</div>
          <div class="btn on">${ic("sel")}<i class="caret"></i></div>
          <div class="btn off mid-gap">${ic("cross")}</div>
          <div class="btn wide">${ic("angle")}<i class="caret"></i></div>
          <div class="btn wide">${ic("plusb")}<i class="caret"></i></div>
          <div class="btn">${ic("stack")}</div>
          <div class="btn">${ic("polyc")}</div>
        </div>
        <span class="hint">按鼠标左键指定第一个角点，或拾取构件图元</span>
      </div>
      <div class="taskbar"><i class="a"></i><i class="c"></i></div>
    `;
  }
}
